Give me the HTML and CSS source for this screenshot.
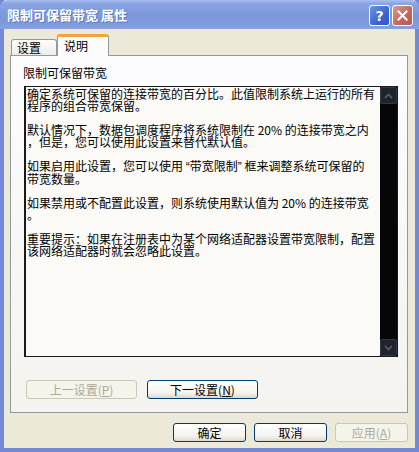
FILE: index.html
```html
<!DOCTYPE html>
<html lang="zh-CN">
<head>
  <meta charset="UTF-8">
  <title>限制可保留带宽 属性</title>
  <link rel="stylesheet" href="styles.css">
</head>
<body>
  <div class="window">
    <div class="titlebar">
      <span class="title">限制可保留带宽&nbsp;属性</span>
      <div class="caption-btns">
        <div class="cap help">?</div>
        <div class="cap close">
          <svg width="11" height="11" viewBox="0 0 11 11"><path d="M1.5 1.5 L9.5 9.5 M9.5 1.5 L1.5 9.5" stroke="#fff" stroke-width="2" stroke-linecap="square"/></svg>
        </div>
      </div>
    </div>

    <div class="client">
      <div class="tabs">
        <div class="tab">设置</div>
        <div class="tab selected">说明</div>
      </div>

      <div class="panel">
        <div class="label">限制可保留带宽</div>
        <div class="textbox">
          <div class="text">
            <div class="para">
              <div class="line">确定系统可保留的连接带宽的百分比。此值限制系统上运行的所有</div>
              <div class="line">程序的组合带宽保留。</div>
            </div>
            <div class="para">
              <div class="line">默认情况下，数据包调度程序将系统限制在 20% 的连接带宽之内</div>
              <div class="line">，但是，您可以使用此设置来替代默认值。</div>
            </div>
            <div class="para">
              <div class="line">如果启用此设置，您可以使用 <span class="q">“</span>带宽限制<span class="q">”</span> 框来调整系统可保留的</div>
              <div class="line">带宽数量。</div>
            </div>
            <div class="para">
              <div class="line">如果禁用或不配置此设置，则系统使用默认值为 20% 的连接带宽</div>
              <div class="line">。</div>
            </div>
            <div class="para">
              <div class="line">重要提示：如果在注册表中为某个网络适配器设置带宽限制，配置</div>
              <div class="line">该网络适配器时就会忽略此设置。</div>
            </div>
          </div>
          <div class="scrollbar">
            <div class="sb-btn">
              <svg width="9" height="6" viewBox="0 0 9 6"><path d="M1 5 L4.5 1.5 L8 5" fill="none" stroke="#5b5e6c" stroke-width="1.6"/></svg>
            </div>
            <div class="sb-track"></div>
            <div class="sb-btn">
              <svg width="9" height="6" viewBox="0 0 9 6"><path d="M1 1 L4.5 4.5 L8 1" fill="none" stroke="#5b5e6c" stroke-width="1.6"/></svg>
            </div>
          </div>
        </div>
        <div class="nav-btns">
          <div class="btn wide disabled">上一设置(<u>P</u>)</div>
          <div class="btn wide">下一设置(<u>N</u>)</div>
        </div>
      </div>

      <div class="dlg-btns">
        <div class="btn">确定</div>
        <div class="btn">取消</div>
        <div class="btn disabled">应用(<u>A</u>)</div>
      </div>
    </div>
  </div>
</body>
</html>
```

FILE: styles.css
```css
body {
  margin: 0;
  font-family: "Noto Sans CJK SC", "DejaVu Sans", sans-serif;
  font-size: 12px;
  color: #000;
  background: #fff;
}
.window {
  width: 419px;
  height: 452px;
  box-sizing: border-box;
  border: 4px solid #7389d8;
  border-top: 0;
  background: #ece9d8;
  display: flex;
  flex-direction: column;
}
.titlebar {
  height: 29px;
  margin: 0 -4px;
  padding: 0 6px 0 7px;
  display: flex;
  align-items: center;
  justify-content: space-between;
  background: linear-gradient(#a9bff0 0%, #8aa5e3 12%, #7b97da 50%, #7f9bdc 85%, #8aa3de 100%);
  border-radius: 7px 7px 0 0;
}
.title {
  color: #fff;
  font-weight: bold;
  font-size: 13px;
  text-shadow: 1px 1px 0 #6178c4;
}
.caption-btns {
  display: flex;
  gap: 2px;
  margin-top: 2px;
}
.cap {
  width: 19px;
  height: 19px;
  border: 1px solid #fff;
  border-radius: 3px;
  display: flex;
  align-items: center;
  justify-content: center;
  color: #fff;
  font-family: "DejaVu Sans", sans-serif;
  font-weight: bold;
  font-size: 14px;
}
.help {
  background: linear-gradient(135deg, #6f93e6, #3a66cf 60%, #2f58c2);
}
.close {
  background: linear-gradient(135deg, #d99a90, #c26a62 55%, #b45a55);
}
.client {
  flex: 1;
  padding: 5px 7px 0 6px;
  display: flex;
  flex-direction: column;
}
.tabs {
  display: flex;
  align-items: flex-end;
  padding-left: 1px;
  height: 21px;
}
.tab {
  width: 46px;
  height: 16px;
  box-sizing: border-box;
  border: 1px solid #919b9c;
  border-bottom: 0;
  border-radius: 3px 3px 0 0;
  background: linear-gradient(#fefefe, #ecebe6);
  padding-left: 5px;
  line-height: 15px;
}
.tab.selected {
  width: 52px;
  height: 22px;
  margin-bottom: -1px;
  position: relative;
  background: #fcfcfe;
  border-top: 3px solid #f2a33a;
  padding-left: 6px;
  line-height: 17px;
}
.panel {
  height: 358px;
  box-sizing: border-box;
  border: 1px solid #919b9c;
  background: linear-gradient(#fcfcfe, #f4f3ee);
  padding: 11px 0 0 12px;
}
.label {
  line-height: 12px;
}
.textbox {
  margin: 7px 0 0 1px;
  width: 374px;
  height: 271px;
  box-sizing: border-box;
  border: 1px solid #1a1a1a;
  border-left-width: 2px;
  background: #fbfaf6;
  display: flex;
}
.text {
  flex: 1;
  padding: 1px 0 0 1px;
  line-height: 12px;
}
.para {
  margin-bottom: 12px;
}
.line {
  white-space: nowrap;
}
.q {
  font-family: "Liberation Sans", sans-serif;
}
.scrollbar {
  width: 17px;
  background: #060609;
  display: flex;
  flex-direction: column;
}
.sb-btn {
  height: 17px;
  box-sizing: border-box;
  border: 1px solid #34364a;
  border-radius: 2px;
  background: #20222c;
  display: flex;
  align-items: center;
  justify-content: center;
}
.sb-track {
  flex: 1;
}
.nav-btns {
  display: flex;
  gap: 10px;
  margin: 23px 0 0 3px;
}
.btn {
  width: 73px;
  height: 19px;
  box-sizing: border-box;
  border: 1px solid #003c74;
  border-radius: 3px;
  background: linear-gradient(#ffffff, #f4f3ee 70%, #dcd8cc);
  text-align: center;
  line-height: 17px;
}
.btn.wide {
  width: 111px;
}
.btn.disabled {
  border-color: #c9c7ba;
  color: #aca899;
  background: #f5f4ea;
}
.dlg-btns {
  display: flex;
  justify-content: flex-end;
  gap: 8px;
  margin-top: 10px;
}
```
